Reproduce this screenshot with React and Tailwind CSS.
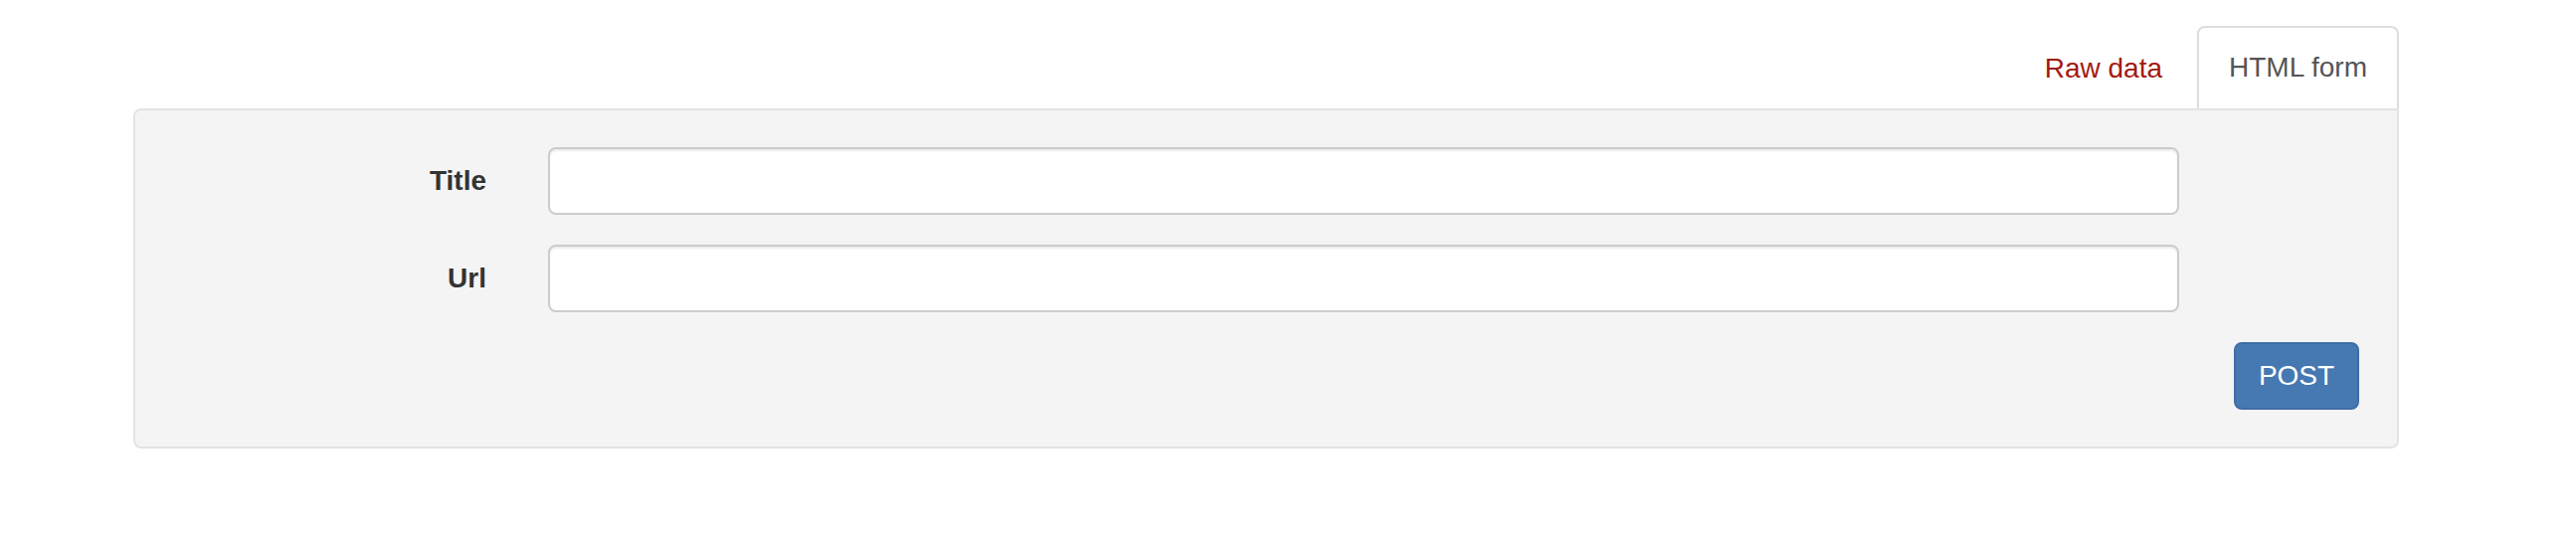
export default function App() {
  const font = { fontFamily: '"Liberation Sans", Arial, Helvetica, sans-serif' };
  return (
    <div className="w-[2590px] h-[546px] bg-white" style={font}>
      <div className="ml-[134px] w-[2278px] pt-[26px]">
        <div className="flex justify-end items-end">
          <a className="mr-[3px] px-[30px] py-[20px] text-[28px] leading-[40px] text-[#a31912] border-2 border-transparent border-b-0">
            Raw data
          </a>
          <a className="px-[30px] pt-[20px] pb-[21px] text-[28px] leading-[40px] text-[#555555] bg-white border-2 border-b-0 border-[#dddddd] rounded-t-[8px]">
            HTML form
          </a>
        </div>
        <div className="bg-[#f4f4f4] border-2 border-[#e3e3e3] rounded-[8px] rounded-tr-none px-[38px] pt-[37px] pb-[37px]">
          <div className="flex flex-col gap-[30px]">
            <div className="flex items-center">
              <label className="w-[315px] text-right text-[28px] font-bold text-[#333333] leading-[40px]">Title</label>
              <input className="ml-[62px] w-[1640px] h-[68px] bg-white border-2 border-[#cccccc] rounded-[8px] shadow-[inset_0_2px_2px_rgba(0,0,0,0.075)] outline-none px-[24px] text-[28px]" />
            </div>
            <div className="flex items-center">
              <label className="w-[315px] text-right text-[28px] font-bold text-[#333333] leading-[40px]">Url</label>
              <input className="ml-[62px] w-[1640px] h-[68px] bg-white border-2 border-[#cccccc] rounded-[8px] shadow-[inset_0_2px_2px_rgba(0,0,0,0.075)] outline-none px-[24px] text-[28px]" />
            </div>
            <div className="flex justify-end">
              <button className="w-[126px] h-[68px] bg-[#4678b1] border-2 border-[#3f6ea5] rounded-[8px] text-white text-[28px] leading-[40px]">
                POST
              </button>
            </div>
          </div>
        </div>
      </div>
    </div>
  );
}
